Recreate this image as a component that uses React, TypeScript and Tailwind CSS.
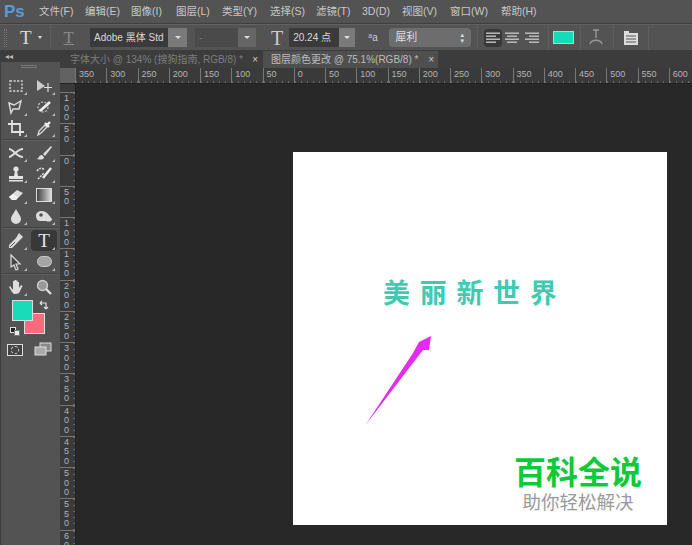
import React from "react";

const cjk = "font-['Liberation_Sans','Noto_Sans_CJK_SC',sans-serif]";

const menus = [
	{label: "文件(F)", w: "w-[46px]"},
	{label: "编辑(E)", w: "w-[46px]"},
	{label: "图像(I)", w: "w-[45px]"},
	{label: "图层(L)", w: "w-[46px]"},
	{label: "类型(Y)", w: "w-[48px]"},
	{label: "选择(S)", w: "w-[46px]"},
	{label: "滤镜(T)", w: "w-[46px]"},
	{label: "3D(D)", w: "w-[40px]"},
	{label: "视图(V)", w: "w-[48px]"},
	{label: "窗口(W)", w: "w-[51px]"},
	{label: "帮助(H)", w: "w-[46px]"},
];

const hLabels = [350, 300, 250, 200, 150, 100, 50, 0, 50, 100, 150, 200, 250, 300, 350, 400, 450, 500, 550, 600];
const vLabels = ["100", "50", "0", "50", "100", "150", "200", "250", "300", "350", "400", "450", "500", "550", "60"];

function Sep() {
	return <div className="w-px h-[24px] bg-[#434343] border-r border-[#5e5e5e]" />;
}

function Select(props: {width: string; field: string; text?: string; dim?: boolean}) {
	return (
		<div className={`${props.width} h-[19px] flex`}>
			<div className={`${props.field} ${props.dim ? "bg-[#4a4a4a] text-[#777]" : "bg-[#3a3a3a] text-[#d8d8d8]"} flex items-center pl-1 text-[10px] whitespace-nowrap overflow-hidden`}>
				{props.text}
			</div>
			<div className={`flex-1 flex items-center justify-center ${props.dim ? "bg-[#666]" : "bg-[#7a7a7a]"}`}>
				<div className="w-0 h-0 border-x-[3px] border-x-transparent border-t-[3px] border-t-[#ddd]" />
			</div>
		</div>
	);
}

function AlignIcon(props: {kind: "left" | "center" | "right"}) {
	const rows = [14, 10, 14, 10];
	return (
		<svg width="14" height="12" viewBox="0 0 14 12" fill="#c4c4c4">
			{rows.map((w, i) => {
				const x = props.kind === "left" ? 0 : props.kind === "center" ? (14 - w) / 2 : 14 - w;
				return <rect key={i} x={x} y={i * 3 + 0.5} width={w} height="1.4" />;
			})}
		</svg>
	);
}

function Tool(props: {active?: boolean; corner?: boolean; children: React.ReactNode}) {
	return (
		<div className={`relative w-[26px] h-[21px] flex items-center justify-center ${props.active ? "bg-[#383838] rounded-sm" : ""}`}>
			{props.children}
			{props.corner !== false && <div className="absolute right-[2px] bottom-[1px] w-0 h-0 border-l-[3px] border-l-transparent border-b-[3px] border-b-[#bbb]" />}
		</div>
	);
}

function ToolSep() {
	return <div className="col-span-2 w-full h-[2px] my-[1px] border-y border-t-[#434343] border-b-[#5f5f5f]" />;
}

const ic = {width: 18, height: 18, viewBox: "0 0 18 18"};

function ToolBox() {
	return (
		<div className="w-[60px] shrink-0 bg-[#535353] flex flex-col border-l border-[#3e3e3e]">
			<div className="h-[11px] bg-[#3c3c3c] flex items-center pl-[4px] text-[#bbb] text-[8px] leading-none">◂◂</div>
			<div className="h-[13px] flex justify-center pt-[3px] pr-[4px]">
				<div className="w-[16px] h-[3px] border-y border-[#777]" />
			</div>
			<div className="grid grid-cols-[28px_28px] justify-items-center ml-[1px]">
				<Tool>
					<svg {...ic} fill="none" stroke="#ddd" strokeWidth="1.4" strokeDasharray="2 1.6">
						<rect x="3" y="4" width="12" height="10" />
					</svg>
				</Tool>
				<Tool>
					<svg {...ic} fill="#ccc">
						<path d="M2 3 L10 9 L2 14 Z" />
						<path d="M13 6 V15 M9 10.5 H17" stroke="#ddd" strokeWidth="1.2" />
					</svg>
				</Tool>
				<Tool>
					<svg {...ic} fill="none" stroke="#ddd" strokeWidth="1.4">
						<path d="M2 5 L7 7 L14 3 L12 11 L6 11 L4 15 Z" />
					</svg>
				</Tool>
				<Tool>
					<svg {...ic} fill="none" stroke="#ccc" strokeWidth="1.2">
						<circle cx="8" cy="9" r="5" strokeDasharray="2 1.5" />
						<path d="M5 13 L15 4" stroke="#eee" strokeWidth="2.6" />
					</svg>
				</Tool>
				<Tool>
					<svg {...ic} fill="none" stroke="#e2e2e2" strokeWidth="1.8">
						<path d="M5 1 V13 H17 M1 5 H13 V17" />
					</svg>
				</Tool>
				<Tool>
					<svg {...ic} fill="none" stroke="#ddd" strokeWidth="1.3">
						<path d="M3 16 L4 12 L10 6 L12 8 L6 14 Z" />
						<path d="M10 4 L14 8 M12 6 L15 3" stroke="#f0f0f0" strokeWidth="2.4" />
					</svg>
				</Tool>
				<ToolSep />
				<Tool>
					<svg {...ic} fill="none" stroke="#ddd" strokeWidth="2">
						<path d="M2 5 C6 5 10 13 16 13 M2 13 C6 13 10 5 16 5" />
					</svg>
				</Tool>
				<Tool>
					<svg {...ic} fill="#ddd">
						<path d="M16 2 L8 10 L10 12 L17 3 Z" />
						<path d="M7 11 C4 11 4 14 2 15 C5 16 9 16 9 13 Z" />
					</svg>
				</Tool>
				<Tool>
					<svg {...ic} fill="#e4e4e4">
						<circle cx="9" cy="4" r="2.6" />
						<path d="M8 6 H10 L11 11 H16 V14 H2 V11 H7 Z" />
						<rect x="2" y="15" width="14" height="1.5" />
					</svg>
				</Tool>
				<Tool>
					<svg {...ic} fill="none" stroke="#ddd" strokeWidth="1.6">
						<path d="M2 6 C5 2 8 3 9 5 M3 14 L9 8" strokeDasharray="2 1" />
						<path d="M8 13 L16 3" stroke="#eee" strokeWidth="2.4" />
					</svg>
				</Tool>
				<Tool>
					<svg {...ic} fill="#ddd">
						<path d="M2 11 L10 4 L16 7 L9 14 H5 Z" />
						<path d="M2 11 L6 8 L11 11 L9 14 H5 Z" fill="#f3f3f3" />
					</svg>
				</Tool>
				<Tool>
					<div className="w-[16px] h-[14px] border border-[#ddd] bg-gradient-to-r from-[#444] to-[#ddd]" />
				</Tool>
				<Tool>
					<svg {...ic} fill="#ddd">
						<path d="M9 2 C11 6 14 9 14 12 A5 5 0 0 1 4 12 C4 9 7 6 9 2 Z" />
					</svg>
				</Tool>
				<Tool>
					<svg {...ic} fill="#ddd">
						<path d="M1 8 C2 3 10 3 13 7 L17 12 C17 15 13 15 11 14 H5 C2 14 1 11 1 8 Z" />
						<circle cx="6" cy="8" r="1.8" fill="#535353" />
					</svg>
				</Tool>
				<ToolSep />
				<Tool>
					<svg {...ic} fill="#ddd">
						<path d="M12 1 L16 5 L12 9 L5 16 L2 16 L2 13 L9 6 Z" />
						<path d="M3 15 L8 10" stroke="#535353" strokeWidth="1" />
					</svg>
				</Tool>
				<Tool active>
					<span className="font-['Liberation_Serif',serif] text-[19px] leading-none text-[#e6e6e6]">T</span>
				</Tool>
				<Tool>
					<svg {...ic} fill="#444" stroke="#ddd" strokeWidth="1.2">
						<path d="M4 2 L13 11 H9 L11 16 L9 17 L7 12 L4 14 Z" />
					</svg>
				</Tool>
				<Tool>
					<div className="w-[15px] h-[11px] rounded-full bg-[#a5a5a5] border border-[#ccc]" />
				</Tool>
				<ToolSep />
				<Tool>
					<svg {...ic} fill="#ddd">
						<path d="M3 8 L6 12 V3 H7.5 V9 V2 H9 V9 V2.5 H10.5 V9 V4 H12 V10 L14 7 L15.5 8 L12 15 C9 17 6 16 5 14 L2 9 Z" />
					</svg>
				</Tool>
				<Tool corner={false}>
					<svg {...ic} fill="none">
						<circle cx="7.5" cy="7.5" r="5" fill="#999" stroke="#ccc" strokeWidth="1.4" />
						<path d="M11 11 L16 16" stroke="#ddd" strokeWidth="2.4" />
					</svg>
				</Tool>
			</div>
			{/* foreground and background swatches */}
			<div className="relative h-[41px] mt-[3px]">
				<div className="absolute left-[23px] top-[13px] w-[21px] h-[21px] bg-[#fb6b7e] border border-[#ddd]" />
				<div className="absolute left-[11px] top-0 w-[21px] h-[21px] bg-[#18dcb9] border border-[#ddd]" />
				<div className="absolute left-[9px] top-[27px] w-[6px] h-[6px] bg-[#222] border border-[#ddd]" />
				<div className="absolute left-[13px] top-[30px] w-[6px] h-[6px] bg-[#eee] border border-[#777]" />
				<svg className="absolute left-[38px] top-0" width="10" height="10" viewBox="0 0 10 10" fill="none" stroke="#ddd" strokeWidth="1.2">
					<path d="M1 3 H7 V9 M1 3 L3 1 M1 3 L3 5 M7 9 L5 7 M7 9 L9 7" />
				</svg>
			</div>
			<div className="flex pl-[6px] gap-[8px] mt-[1px]">
				<div className="w-[16px] h-[12px] mt-[2px] border border-[#ddd] bg-[#444] flex items-center justify-center">
					<div className="w-[8px] h-[8px] rounded-full border border-dashed border-[#ccc]" />
				</div>
				<svg width="18" height="16" viewBox="0 0 18 16" fill="#888" stroke="#ddd" className="ml-[3px]">
					<rect x="6" y="1" width="11" height="8" />
					<rect x="1" y="5" width="11" height="8" fill="#aaa" />
				</svg>
			</div>
		</div>
	);
}

function HRuler() {
	return (
		<div className="h-[16px] shrink-0 flex bg-[#3a3a3a] border-b border-[#222]">
			<div className="w-[15px] shrink-0 bg-[#626262]" />
			{hLabels.map((n, i) => (
				<div key={i} className="w-[31.25px] shrink-0 border-l border-[#777] flex flex-col">
					<div className="pl-[3px] text-[9px] leading-[12px] text-[#b4b4b4]">{n}</div>
					<div className="mt-auto h-[2px] bg-[repeating-linear-gradient(90deg,#6a6a6a_0,#6a6a6a_1px,transparent_1px,transparent_6px)]" />
				</div>
			))}
		</div>
	);
}

function VRuler() {
	return (
		<div className="w-[16px] shrink-0 bg-[#3a3a3a] border-r border-[#222] pt-[8px] overflow-hidden">
			{vLabels.map((n, i) => (
				<div key={i} className="h-[31.25px] border-t border-[#777] flex">
					<div className="flex-1 flex flex-col items-center pt-[1px] text-[9px] leading-[9.5px] text-[#b4b4b4]">
						{n.split("").map((c, j) => (
							<span key={j}>{c}</span>
						))}
					</div>
					<div className="w-[2px] bg-[repeating-linear-gradient(180deg,#6a6a6a_0,#6a6a6a_1px,transparent_1px,transparent_6px)]" />
				</div>
			))}
		</div>
	);
}

function Doc() {
	return (
		<div className={`w-[374px] h-[373px] bg-white flex flex-col ${cjk}`}>
			<div className="pl-[90px] pt-[126px] text-[27px] leading-[32px] font-bold tracking-[9.7px] whitespace-nowrap text-[#3fcbb2]">美丽新世界</div>
			<svg className="ml-[72px] mt-[25px]" width="68" height="92" viewBox="0 0 68 92">
				<path d="M0.5 90 L48 18 L54 7 L66 1 L64 15 L58 15 Z" fill="#e22cf0" />
			</svg>
			<div className="self-end mr-[25px] mt-[28px] flex flex-col items-center">
				<div className="text-[32px] leading-[36px] font-bold text-[#10c93a] whitespace-nowrap">百科全说</div>
				<div className="text-[18.5px] leading-[22px] mt-[1px] text-[#9a9a9a] whitespace-nowrap">助你轻松解决</div>
			</div>
		</div>
	);
}

export default function App() {
	return (
		<div className={`w-[692px] h-[545px] overflow-hidden bg-[#535353] flex flex-col ${cjk}`}>
			{/* menu bar */}
			<div className="h-[24px] shrink-0 flex items-center border-b border-[#3f3f3f]">
				<div className="w-[39px] pl-[4px] font-bold text-[17px] leading-none text-[#5b9bd0]">Ps</div>
				{menus.map((m) => (
					<div key={m.label} className={`${m.w} text-[10.5px] text-[#c8c8c8] whitespace-nowrap`}>
						{m.label}
					</div>
				))}
			</div>

			{/* options bar */}
			<div className="h-[27px] shrink-0 flex items-center border-t border-[#616161] border-b border-b-[#3c3c3c]">
				<div className="w-[3px] h-[18px] ml-[4px] mr-[13px] border-x border-dotted border-[#777]" />
				<span className="font-['Liberation_Serif',serif] text-[19px] leading-none text-[#ddd]">T</span>
				<div className="ml-[6px] mr-[8px] w-0 h-0 border-x-[2.5px] border-x-transparent border-t-[3px] border-t-[#ddd]" />
				<Sep />
				<span className="ml-[13px] mr-[16px] font-['Liberation_Serif',serif] underline text-[17px] leading-none text-[#8a8a8a]">T</span>
				<Select width="w-[97px]" field="w-[78px]" text="Adobe 黑体 Std" />
				<div className="w-[8px]" />
				<Select width="w-[61px]" field="w-[43px]" text="-" dim />
				<span className="ml-[15px] mr-[6px] font-['Liberation_Serif',serif] text-[20px] leading-none text-[#ccc]">T</span>
				<Select width="w-[66px]" field="w-[50px]" text="20.24 点" />
				<span className="ml-[13px] mr-[5px] text-[10px] text-[#ccc] w-[16px]">
					<sup className="text-[7px]">a</sup>a
				</span>
				<div className="w-[82px] h-[19px] bg-[#6d6d6d] rounded-sm flex items-center justify-between px-[6px] text-[11px] text-[#ddd]">
					犀利
					<span className="text-[6px] leading-[6px] text-[#ddd] text-center">
						▲<br />▼
					</span>
				</div>
				<div className="w-[6px]" />
				<Sep />
				<div className="ml-[6px] w-[18px] h-[18px] bg-[#383838] rounded-sm flex items-center justify-center">
					<AlignIcon kind="left" />
				</div>
				<div className="ml-[1px] w-[18px] flex justify-center">
					<AlignIcon kind="center" />
				</div>
				<div className="ml-[2px] w-[18px] flex justify-center">
					<AlignIcon kind="right" />
				</div>
				<div className="w-[7px]" />
				<Sep />
				<div className="ml-[4px] w-[21px] h-[13px] bg-[#14dcb8] border border-[#ccc]" />
				<div className="w-[6px]" />
				<Sep />
				<svg className="ml-[8px] mr-[10px]" width="14" height="17" viewBox="0 0 14 17" fill="none" stroke="#999" strokeWidth="1.4">
					<path d="M4 1 H10 M7 1 V9 M1 15 C3 10 11 10 13 15" />
				</svg>
				<Sep />
				<svg className="ml-[10px] mr-[10px]" width="14" height="14" viewBox="0 0 14 14" fill="#ddd">
					<path d="M0 0 H5 V2 H14 V14 H0 Z" />
					<path d="M2 5 H12 M2 8 H12 M2 11 H12" stroke="#555" />
				</svg>
				<Sep />
			</div>

			<div className="flex-1 flex min-h-0">
				<ToolBox />
				<div className="flex-1 flex flex-col min-w-0">
					{/* document tabs */}
					<div className="h-[17px] shrink-0 bg-[#3c3c3c] flex text-[10px] leading-[17px] whitespace-nowrap">
						<div className="w-[201px] ml-[1px] pl-[9px] flex justify-between pr-[4px] text-[#7d7d7d]">
							<span>字体大小 @ 134% (搜狗指南, RGB/8) *</span>
							<span className="text-[#ccc]">×</span>
						</div>
						<div className="w-[175px] ml-[1px] pl-[8px] flex justify-between pr-[4px] bg-[#4f4f4f] text-[#bdbdbd]">
							<span>图层颜色更改 @ 75.1%(RGB/8) *</span>
							<span className="text-[#ccc]">×</span>
						</div>
					</div>
					<HRuler />
					<div className="flex-1 flex min-h-0">
						<VRuler />
						<div className="flex-1 bg-[#282828] pl-[217px] pt-[68px] overflow-hidden">
							<Doc />
						</div>
					</div>
				</div>
			</div>
		</div>
	);
}
